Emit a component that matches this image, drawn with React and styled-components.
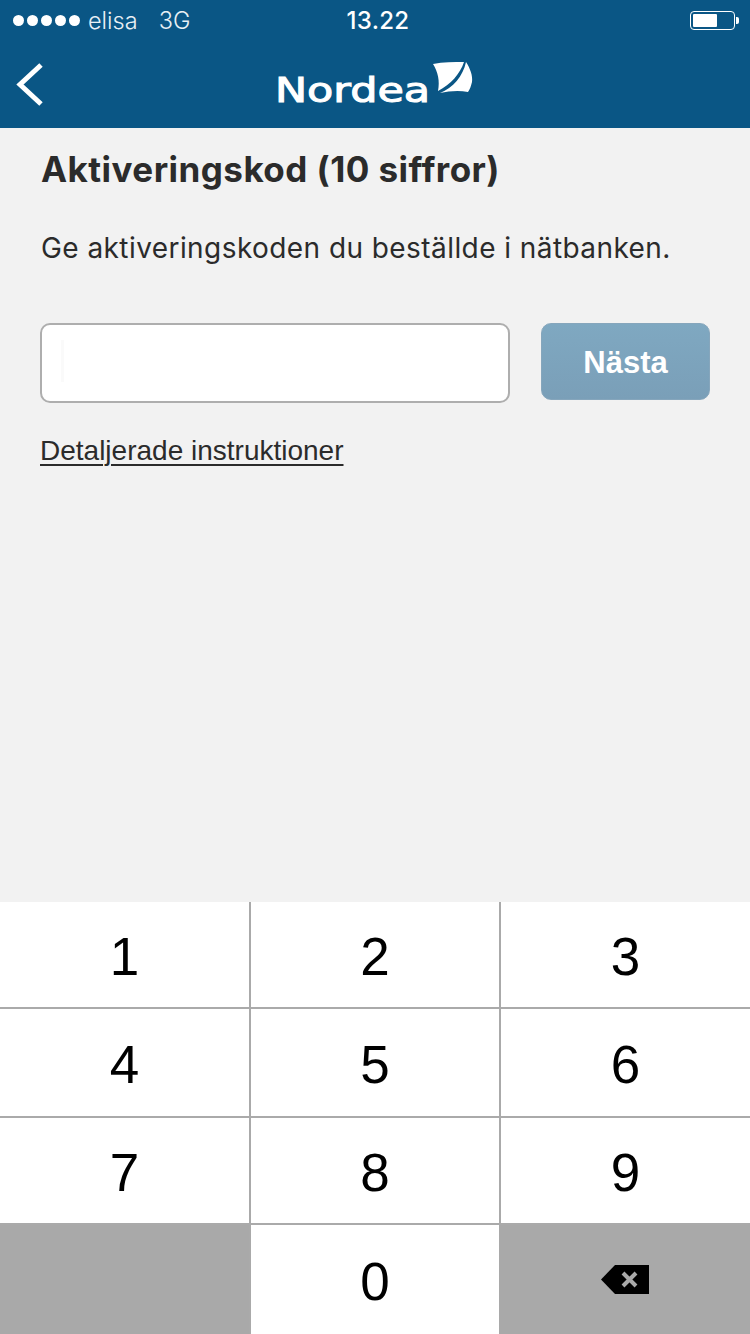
import React from 'react'
import styled, { createGlobalStyle } from 'styled-components'

const GlobalStyle = createGlobalStyle`
  html, body {
    margin: 0;
    padding: 0;
    background: #f2f2f2;
  }
  * {
    box-sizing: border-box;
  }
`

const Page = styled.div`
  width: 750px;
  height: 1334px;
  display: flex;
  flex-direction: column;
  overflow: hidden;
  background: #f2f2f2;
  font-family: Inter, "Liberation Sans", sans-serif;
  color: #2b2b2b;
`

const Header = styled.header`
  height: 128px;
  flex: none;
  display: flex;
  flex-direction: column;
  background: #0a5685;
  color: #fff;
`

const StatusBar = styled.div`
  height: 41px;
  padding: 0 11px 0 13px;
  display: grid;
  grid-template-columns: 1fr auto 1fr;
  align-items: center;
`

const StatusLeft = styled.div`
  display: flex;
  align-items: center;
  font-size: 23.5px;
  font-weight: 300;
  color: #e8f0f5;
`

const Signal = styled.div`
  display: flex;
  gap: 3px;
  margin-right: 8px;
`

const Dot = styled.span`
  width: 11px;
  height: 11px;
  border-radius: 50%;
  background: #fff;
`

const Network = styled.span`
  margin-left: 21px;
`

const Clock = styled.div`
  margin-left: 4px;
  font-size: 24px;
  font-weight: 500;
  letter-spacing: 0.3px;
`

const StatusRight = styled.div`
  display: flex;
  justify-content: flex-end;
  align-items: center;
`

const Battery = styled.div`
  width: 45px;
  height: 19px;
  padding: 2px;
  border: 1px solid #fff;
  border-radius: 4px;
`

const BatteryLevel = styled.div`
  height: 100%;
  background: #fff;
  border-radius: 1px;
`

const BatteryTip = styled.div`
  width: 3px;
  height: 7px;
  margin-left: 1px;
  background: #fff;
  border-radius: 0 2px 2px 0;
`

const NavBar = styled.div`
  position: relative;
  flex: 1;
  display: flex;
  align-items: center;
  justify-content: center;
`

const BackButton = styled.svg`
  position: absolute;
  left: 16px;
  top: 21px;
`

const Logo = styled.div`
  display: flex;
  align-items: flex-end;
  transform: translateX(-1px) translateY(1px);
`

const Wordmark = styled.span`
  margin-right: 38px;
  font-family: "DejaVu Sans", sans-serif;
  font-size: 33px;
  font-weight: 400;
  line-height: 36px;
  -webkit-text-stroke: 1px #fff;
  transform: scaleX(1.3);
  transform-origin: left center;
`

const Sail = styled.svg`
  margin-bottom: 15px;
`

const Content = styled.main`
  flex: 1;
  padding: 20px 40px 0 41px;
`

const Title = styled.h1`
  margin: 0;
  font-size: 35px;
  line-height: 42px;
  font-weight: 700;
  letter-spacing: 0.45px;
`

const Lead = styled.p`
  margin: 41px 0 0;
  font-size: 28px;
  line-height: 34px;
  font-weight: 400;
  letter-spacing: 0.43px;
`

const FormRow = styled.div`
  display: flex;
  align-items: flex-start;
  margin-top: 58px;
  margin-left: -1px;
  gap: 31px;
`

const CodeInput = styled.div`
  position: relative;
  width: 470px;
  height: 80px;
  background: #fff;
  border: 2px solid #aeaeae;
  border-radius: 10px;
`

const Caret = styled.span`
  position: absolute;
  left: 19px;
  top: 15px;
  width: 3px;
  height: 42px;
  background: #fafafa;
`

const NextButton = styled.button`
  width: 169px;
  height: 77px;
  padding: 3px 0 0;
  border: 1px solid #86a6bc;
  border-radius: 10px;
  background: linear-gradient(#7fa8c1, #7a9fb8);
  color: #fff;
  font-family: "Liberation Sans", sans-serif;
  font-size: 31px;
  font-weight: 700;
`

const HelpLink = styled.a`
  display: inline-block;
  margin: 30px 0 0 -1px;
  font-family: "Liberation Sans", sans-serif;
  font-size: 28px;
  line-height: 36px;
  color: #2b2b2b;
  text-decoration: underline;
  text-underline-offset: 4px;
  text-decoration-thickness: 2px;
`

const Keypad = styled.div`
  flex: none;
  height: 432px;
  display: grid;
  grid-template-columns: 249px 250px 251px;
  grid-template-rows: 105px 107px 105px 109px;
  row-gap: 2px;
  background: #aaaaaa;
`

const Key = styled.div`
  display: flex;
  align-items: center;
  justify-content: center;
  padding-top: ${(p) => (p.$icon ? '0' : '3px')};
  background: ${(p) => (p.$dark ? '#a9a9a9' : '#fff')};
  border-left: ${(p) => (p.$divider ? '2px solid #aaaaaa' : '0')};
  font-family: "Liberation Sans", sans-serif;
  font-size: 53px;
  font-weight: 400;
  color: #000;
`

const digits = ['1', '2', '3', '4', '5', '6', '7', '8', '9']

export default function App() {
  return (
    <>
      <GlobalStyle />
      <Page>
        <Header>
          <StatusBar>
            <StatusLeft>
              <Signal>
                {[0, 1, 2, 3, 4].map((i) => (
                  <Dot key={i} />
                ))}
              </Signal>
              elisa
              <Network>3G</Network>
            </StatusLeft>
            <Clock>13.22</Clock>
            <StatusRight>
              <Battery>
                <BatteryLevel style={{ width: '62%' }} />
              </Battery>
              <BatteryTip />
            </StatusRight>
          </StatusBar>
          <NavBar>
            <BackButton width="30" height="44" viewBox="0 0 30 44">
              <path d="M25 3 L4 22.5 L25 42" fill="none" stroke="#fff" strokeWidth="5" />
            </BackButton>
            <Logo>
              <Wordmark>Nordea</Wordmark>
              <Sail width="40" height="32" viewBox="0 0 40 32">
                <path d="M0 2 C10 0 21 0 31 0 C27 12 18 22 5 29 C7 19 5 10 0 2 Z" fill="#fff" />
                <path d="M33 0 C37 6 40 14 39 20 C38 24 37 27 35 30 C26 28 16 29 7 31 C20 26 30 14 33 0 Z" fill="#fff" />
              </Sail>
            </Logo>
          </NavBar>
        </Header>
        <Content>
          <Title>Aktiveringskod (10 siffror)</Title>
          <Lead>Ge aktiveringskoden du beställde i nätbanken.</Lead>
          <FormRow>
            <CodeInput>
              <Caret />
            </CodeInput>
            <NextButton>Nästa</NextButton>
          </FormRow>
          <HelpLink>Detaljerade instruktioner</HelpLink>
        </Content>
        <Keypad>
          {digits.map((d, i) => (
            <Key key={d} $divider={i % 3 !== 0}>
              {d}
            </Key>
          ))}
          <Key $dark />
          <Key $divider>0</Key>
          <Key $dark $icon>
            <svg width="48" height="29" viewBox="0 0 48 29">
              <path d="M14 0 H48 V29 H14 L0 14.5 Z" fill="#000" />
              <path d="M22 8 L35 21 M35 8 L22 21" stroke="#a9a9a9" strokeWidth="4" />
            </svg>
          </Key>
        </Keypad>
      </Page>
    </>
  )
}
